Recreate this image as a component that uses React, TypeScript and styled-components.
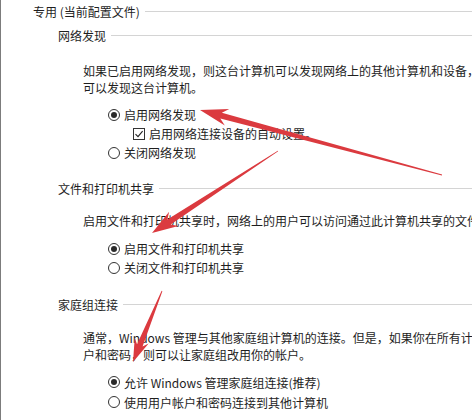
import React from "react";
import styled, { createGlobalStyle } from "styled-components";

const Global = createGlobalStyle`
  html, body { margin: 0; padding: 0; background: #fff; }
  body { font-family: "Noto Sans CJK SC", "Microsoft YaHei", sans-serif; }
`;

const Page = styled.div`
  position: relative;
  width: 472px;
  height: 420px;
  overflow: hidden;
  background: #fff;
  border-left: 1px solid #7c7c7c;
  box-sizing: border-box;
  color: #1e1e1e;
  font-size: 12px;
`;

const HeadRow = styled.div<{ $indent: number; $gap: number }>`
  display: flex;
  align-items: center;
  height: 22px;
  margin-top: ${(p) => p.$gap}px;
  padding-left: ${(p) => p.$indent}px;
  white-space: nowrap;
`;

const Rule = styled.div`
  flex: 1;
  height: 1px;
  margin-left: 5px;
  background: #d4d4d4;
`;

const Para = styled.p<{ $gap: number }>`
  margin: ${(p) => p.$gap}px 0 0;
  padding-left: 82px;
  line-height: 17px;
  white-space: nowrap;
`;

const Options = styled.div<{ $gap: number; $row: number }>`
  margin-top: ${(p) => p.$gap}px;
  padding-left: 107px;
  display: grid;
  grid-auto-rows: ${(p) => p.$row}px;
`;

const Option = styled.label<{ $sub?: boolean }>`
  display: flex;
  align-items: center;
  gap: 4px;
  padding-left: ${(p) => (p.$sub ? 25 : 0)}px;
  white-space: nowrap;
`;

const Radio = styled.span<{ $on?: boolean }>`
  width: 12px;
  height: 12px;
  box-sizing: border-box;
  border: 1px solid #333;
  border-radius: 50%;
  display: inline-flex;
  align-items: center;
  justify-content: center;
  &::after {
    content: "";
    width: 6px;
    height: 6px;
    border-radius: 50%;
    background: ${(p) => (p.$on ? "#2a2a2a" : "transparent")};
  }
`;

const Check = styled.span`
  width: 12px;
  height: 12px;
  box-sizing: border-box;
  border: 1px solid #333;
  display: inline-flex;
  align-items: center;
  justify-content: center;
`;

const Overlay = styled.svg`
  position: absolute;
  left: 0;
  top: 0;
  pointer-events: none;
`;

type Pt = [number, number];

function arrowPoints(tail: Pt, tip: Pt, head: number, half: number, neck: number, end: number) {
  const dx = tip[0] - tail[0];
  const dy = tip[1] - tail[1];
  const len = Math.hypot(dx, dy);
  const ux = dx / len;
  const uy = dy / len;
  const nx = -uy;
  const ny = ux;
  const bx = tip[0] - ux * head;
  const by = tip[1] - uy * head;
  const nb = tip[0] - ux * (head * 0.78);
  const nby = tip[1] - uy * (head * 0.78);
  const pts: Pt[] = [
    [tail[0] + nx * end, tail[1] + ny * end],
    [nb + nx * neck, nby + ny * neck],
    [bx + nx * half, by + ny * half],
    tip,
    [bx - nx * half, by - ny * half],
    [nb - nx * neck, nby - ny * neck],
    [tail[0] - nx * end, tail[1] - ny * end],
  ];
  return pts.map((p) => p.join(",")).join(" ");
}

const arrows: { tail: Pt; tip: Pt; head: number; half: number }[] = [
  { tail: [441, 175], tip: [199, 110], head: 28, half: 8.5 },
  { tail: [277, 151], tip: [151, 233], head: 26, half: 8.5 },
  { tail: [161, 291], tip: [132, 362], head: 23, half: 7.5 },
];

function Arrows() {
  return (
    <Overlay width={472} height={420}>
      {arrows.map((a, i) => (
        <polygon
          key={i}
          points={arrowPoints(a.tail, a.tip, a.head, a.half, 3, 0.4)}
          fill="#db3a3f"
        />
      ))}
    </Overlay>
  );
}

export default function App() {
  return (
    <>
      <Global />
      <Page>
        <HeadRow $indent={32} $gap={0}>
          专用 (当前配置文件)
          <Rule />
        </HeadRow>

        <HeadRow $indent={57} $gap={2}>
          网络发现
          <Rule />
        </HeadRow>
        <Para $gap={16}>
          如果已启用网络发现，则这台计算机可以发现网络上的其他计算机和设备，
          <br />
          可以发现这台计算机。
        </Para>
        <Options $gap={9} $row={19}>
          <Option>
            <Radio $on />
            启用网络发现
          </Option>
          <Option $sub>
            <Check>
              <svg width="10" height="10" viewBox="0 0 10 10">
                <path d="M1.5 5.2 L4 7.6 L8.6 2.2" fill="none" stroke="#222" strokeWidth="1.1" />
              </svg>
            </Check>
            启用网络连接设备的自动设置。
          </Option>
          <Option>
            <Radio />
            关闭网络发现
          </Option>
        </Options>

        <HeadRow $indent={57} $gap={15}>
          文件和打印机共享
          <Rule />
        </HeadRow>
        <Para $gap={13}>启用文件和打印机共享时，网络上的用户可以访问通过此计算机共享的文件和打印机。</Para>
        <Options $gap={10} $row={19}>
          <Option>
            <Radio $on />
            启用文件和打印机共享
          </Option>
          <Option>
            <Radio />
            关闭文件和打印机共享
          </Option>
        </Options>

        <HeadRow $indent={57} $gap={16}>
          家庭组连接
          <Rule />
        </HeadRow>
        <Para $gap={14}>
          通常，Windows 管理与其他家庭组计算机的连接。但是，如果你在所有计算机上都有相同的用户帐
          <br />
          户和密码，则可以让家庭组改用你的帐户。
        </Para>
        <Options $gap={9} $row={20}>
          <Option>
            <Radio $on />
            允许 Windows 管理家庭组连接(推荐)
          </Option>
          <Option>
            <Radio />
            使用用户帐户和密码连接到其他计算机
          </Option>
        </Options>

        <Arrows />
      </Page>
    </>
  );
}
